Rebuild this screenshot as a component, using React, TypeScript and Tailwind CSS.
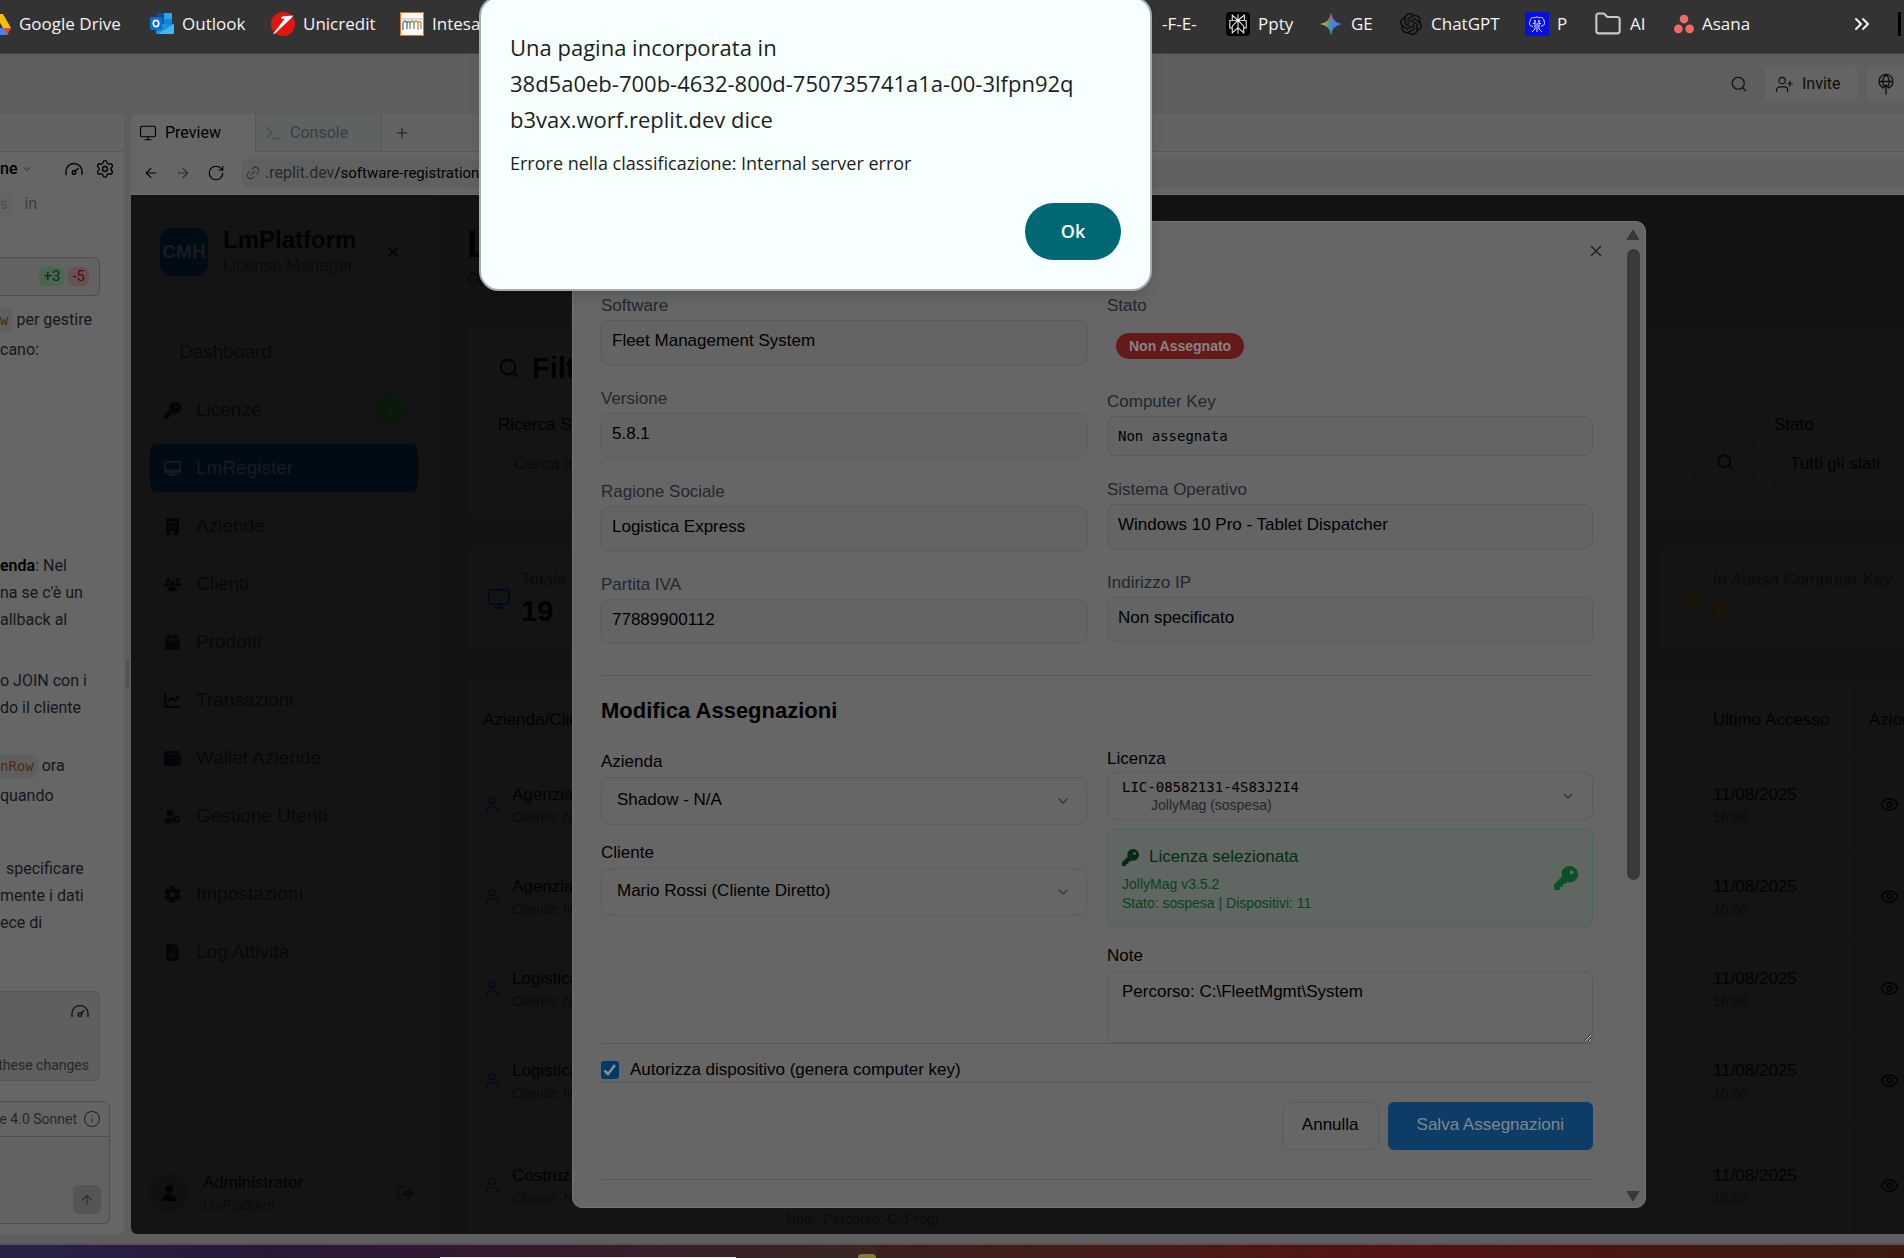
import type { ReactNode } from "react";
import {
  FaBox,
  FaBuilding,
  FaChartLine,
  FaDesktop,
  FaFileLines,
  FaGear,
  FaKey,
  FaRightFromBracket,
  FaUser,
  FaUserGear,
  FaUsers,
  FaWallet,
} from "react-icons/fa6";
import { SiAsana, SiOpenai, SiPerplexity } from "react-icons/si";
import {
  ArrowLeft,
  ArrowRight,
  ArrowUp,
  ChevronDown,
  ChevronsRight,
  Eye,
  Folder,
  Info,
  Link2,
  Monitor,
  Plus,
  RotateCw,
  Search,
  Settings,
  User,
  UserPlus,
  X,
} from "lucide-react";

/* ---------- Bookmark icons ---------- */

function DriveIcon() {
  return (
    <svg viewBox="0 0 24 24" className="h-6 w-6 shrink-0">
      <path d="M8 2h8l8 14h-8z" fill="#fbbc04" />
      <path d="M8 2l4 7-8 14-4-7z" fill="#0f9d58" />
      <path d="M8 16h16l-4 7H4z" fill="#4285f4" />
      <path d="M16 16h8l-4 7z" fill="#ea4335" />
    </svg>
  );
}

function OutlookIcon() {
  return (
    <svg viewBox="0 0 24 24" className="h-6 w-6 shrink-0">
      <path d="M7 1h15v11H7z" fill="#0f5fb8" />
      <path d="M7 1h7v6H7z" fill="#0b4e9e" />
      <path d="M14 1h8v6h-8z" fill="#2aa5ea" />
      <path d="M14 7h8v5h-8z" fill="#1583d8" />
      <path d="M6 12h18v9a1 1 0 0 1-1 1H7a1 1 0 0 1-1-1z" fill="#1a8ee0" />
      <path d="M24 12L8 22h15a1 1 0 0 0 1-1z" fill="#41b9f2" />
      <rect x="0" y="5" width="12" height="13" rx="1" fill="#0a6cd0" />
      <ellipse cx="6" cy="11.500" rx="2.700" ry="3.100" fill="none" stroke="#fff" strokeWidth="1.700" />
    </svg>
  );
}

function UnicreditIcon() {
  return (
    <svg viewBox="0 0 24 24" className="h-6 w-6 shrink-0">
      <circle cx="12" cy="12" r="12" fill="#e2160f" />
      <path d="M11 4.500l11-1-1 2L4 21.500l-2 .5L13.500 7 10 6.500z" fill="#fff" />
    </svg>
  );
}

function IntesaIcon() {
  return (
    <svg viewBox="0 0 24 24" className="h-6 w-6 shrink-0">
      <rect x="0.500" y="0.500" width="23" height="23" fill="#fff" stroke="#ee6b1e" />
      <path d="M2 7h20" stroke="#e8a27a" />
      <path d="M3 18V11q2-4 4 0v6M7 11q1-3 3 0" fill="none" stroke="#5b7d9c" strokeWidth="1.400" />
      <path d="M10 17v-6q2-4 4 0v6" fill="none" stroke="#6d9a62" strokeWidth="1.400" />
      <path d="M14 11q2-4 4 0v7M18 11q1-3 3 0v6" fill="none" stroke="#c98a5c" strokeWidth="1.400" />
    </svg>
  );
}

function GeminiIcon() {
  return (
    <svg viewBox="0 0 24 24" className="h-6 w-6 shrink-0">
      <defs>
        <linearGradient id="gem-h" x1="0" y1="0" x2="1" y2="0">
          <stop offset="0" stopColor="#fbbc04" />
          <stop offset="0.400" stopColor="#4f9d8f" />
          <stop offset="0.600" stopColor="#3b82f6" />
          <stop offset="1" stopColor="#3b82f6" />
        </linearGradient>
        <linearGradient id="gem-v" x1="0" y1="0" x2="0" y2="1">
          <stop offset="0" stopColor="#ef4444" />
          <stop offset="0.450" stopColor="#ef4444" stopOpacity="0" />
          <stop offset="0.700" stopColor="#22b45a" stopOpacity="0" />
          <stop offset="1" stopColor="#22b45a" />
        </linearGradient>
      </defs>
      <path d="M12 1q1.500 9.500 11 11-9.500 1.500-11 11-1.500-9.500-11-11Q10.500 10.500 12 1z" fill="url(#gem-h)" />
      <path d="M12 1q1.500 9.500 11 11-9.500 1.500-11 11-1.500-9.500-11-11Q10.500 10.500 12 1z" fill="url(#gem-v)" />
    </svg>
  );
}

function BrainIcon() {
  return (
    <svg viewBox="0 0 24 24" className="h-6 w-6 shrink-0">
      <rect width="24" height="24" fill="#0510e0" />
      <path
        d="M8 14.500c-3 0-4.500-3-3-5C5 6 8 4.500 10 6c1-1.500 3-1.500 4 0 2-1.500 5 0 5 3 1.500 2.500 0 5-3 5M9 9h2M13 9h2M10 8v9l-3 3M12 11v9M14 8v9l3 3M8 11.500h2M14 11.500h2"
        fill="none"
        stroke="#dfe3ff"
        strokeWidth="1"
      />
    </svg>
  );
}

function GaugeIcon() {
  return (
    <svg viewBox="0 0 18 14" className="h-[14px] w-[18px]" fill="none" stroke="currentColor" strokeWidth="1.400" strokeLinecap="round">
      <path d="M1 12.500V9.500a8 8 0 0 1 16 0v3" />
      <circle cx="9" cy="10.500" r="1.800" />
      <path d="M10.200 9.200L13 6.500" />
    </svg>
  );
}

function DeployIcon() {
  return (
    <svg viewBox="0 0 20 22" className="h-[22px] w-5" fill="none" stroke="currentColor" strokeWidth="1.300" strokeLinecap="round" strokeLinejoin="round">
      <path d="M6.500 14.500a7 7 0 1 1 7 0M3 8.500h14M10 1.500c-4 4-4 8-2 12M10 1.500c4 4 4 8 2 12M10 12v9M7 15l3-3 3 3" />
    </svg>
  );
}

type Mark = { label: string; icon?: ReactNode; width: string };

const leftMarks: Mark[] = [
  { label: "Google Drive", icon: <DriveIcon />, width: "w-[163px]" },
  { label: "Outlook", icon: <OutlookIcon />, width: "w-[121px]" },
  { label: "Unicredit", icon: <UnicreditIcon />, width: "w-[129px]" },
  { label: "Intesa", icon: <IntesaIcon />, width: "w-[100px]" },
];

const rightMarks: Mark[] = [
  { label: "-F-E-", width: "w-[64px]" },
  {
    label: "Ppty",
    icon: (
      <span className="flex h-6 w-6 shrink-0 items-center justify-center rounded-sm bg-black text-white">
        <SiPerplexity className="h-5 w-5" />
      </span>
    ),
    width: "w-[93px]",
  },
  { label: "GE", icon: <GeminiIcon />, width: "w-[80px]" },
  { label: "ChatGPT", icon: <SiOpenai className="h-[22px] w-6 shrink-0 text-[#0c0c0c]" />, width: "w-[126px]" },
  { label: "P", icon: <BrainIcon />, width: "w-[69px]" },
  { label: "AI", icon: <Folder className="h-7 w-7 shrink-0 text-[#c9c9c9]" strokeWidth={1.8} />, width: "w-[80px]" },
  { label: "Asana", icon: <SiAsana className="h-5 w-5 shrink-0 text-[#f06a6a]" />, width: "w-[84px]" },
];

function Bookmark({ label, icon, width }: Mark) {
  return (
    <a href="#" className={`flex h-12 shrink-0 items-center gap-2 whitespace-nowrap ${width}`}>
      {icon}
      {label}
    </a>
  );
}

function BookmarksBar() {
  return (
    <nav className="flex h-[54px] shrink-0 justify-between overflow-hidden border-b border-[#414141] bg-[#333333] font-['Open_Sans',sans-serif] text-[17px] text-[#f4f4f4]">
      <div className="-ml-[13px] flex">
        {leftMarks.map((m) => (
          <Bookmark key={m.label} {...m} />
        ))}
      </div>
      <div className="flex">
        {rightMarks.map((m) => (
          <Bookmark key={m.label} {...m} />
        ))}
        <button aria-label="Altri preferiti" className="ml-24 flex h-12 w-11 items-center">
          <ChevronsRight className="-ml-1 h-6 w-6" strokeWidth={2} />
        </button>
        <div className="mt-3 mr-[3px] h-6 w-[3px] bg-black" />
      </div>
    </nav>
  );
}

/* ---------- Left chat column ---------- */

function CodeChip({ children }: { children: ReactNode }) {
  return (
    <code className="mr-1 rounded-r-md bg-[#5f5f5f] py-1 pr-1 font-['DejaVu_Sans_Mono',monospace] text-[14px] text-[#4a2c10]">
      {children}
    </code>
  );
}

function ChatColumn() {
  return (
    <aside className="flex w-[124px] shrink-0 flex-col overflow-hidden rounded-r-md bg-[#666666] text-[16px] whitespace-nowrap text-[#15171a]">
      <div className="h-[38px] shrink-0 border-b border-[#575757] bg-[#636363]" />
      <div className="flex h-[34px] shrink-0 items-center font-medium text-black">
        <span>ne</span>
        <ChevronDown className="ml-1 h-3 w-3 text-[#2b2b2b]" />
        <button aria-label="Prestazioni" className="ml-8"><GaugeIcon /></button>
        <button aria-label="Impostazioni chat" className="ml-3"><Settings className="h-5 w-5" strokeWidth={1.6} /></button>
      </div>
      <p className="mt-1 h-[27px] leading-[27px] text-[#3b3d40]">
        <code className="mr-3 rounded-r-md bg-[#646464] py-1 pr-1 font-['DejaVu_Sans_Mono',monospace] text-[14px] text-[#544a3e]">s</code>in
      </p>
      <div className="mt-10 mr-6 flex h-[39px] shrink-0 items-center justify-end gap-1 rounded-r-md border border-l-0 border-[#4e4e4e] bg-[#626262] pr-[10px] text-[15px]">
        <span className="rounded-md bg-[#4a664f] px-1 leading-[19px] text-[#0d2b14]">+3</span>
        <span className="rounded-md bg-[#665252] px-1 leading-[19px] text-[#54080a]">-5</span>
      </div>
      <p className="mt-[9px] leading-[30px]"><CodeChip>w</CodeChip>per gestire</p>
      <p className="leading-[30px]">cano:</p>
      <p className="mt-[187px] leading-[27px]"><b className="font-semibold text-black">enda</b>: Nel</p>
      <p className="leading-[27px]">na se c'è un</p>
      <p className="leading-[27px]">allback al</p>
      <p className="mt-[34px] leading-[27px]">o JOIN con i</p>
      <p className="leading-[27px]">do il cliente</p>
      <p className="mt-[30px] leading-[30px]"><CodeChip>nRow</CodeChip>ora</p>
      <p className="leading-[30px]">quando</p>
      <p className="mt-11 pl-[6px] leading-[27px]">specificare</p>
      <p className="leading-[27px]">mente i dati</p>
      <p className="leading-[27px]">ece di</p>
      <div className="mt-auto mr-6 flex h-[90px] shrink-0 flex-col items-end justify-between rounded-r-md border border-l-0 border-[#575757] bg-[#5f5f5f] pt-3 pr-[10px] pb-1">
        <GaugeIcon />
        <span className="text-[14px] leading-[21px] text-[#26282b]">these changes</span>
      </div>
      <div className="mt-5 mr-[14px] mb-[10px] flex h-[123px] shrink-0 flex-col rounded-r-md border border-l-0 border-[#4e4e4e] bg-[#626262]">
        <div className="flex h-[35px] items-center justify-end gap-[6px] border-b border-[#4e4e4e] bg-[#646464] pr-2 text-[14px] text-[#26282b]">
          <span>e 4.0 Sonnet</span>
          <Info className="h-[18px] w-[18px] shrink-0" strokeWidth={1.5} />
        </div>
        <button aria-label="Invia" className="mt-auto mr-2 mb-[9px] flex h-[29px] w-7 items-center justify-center self-end rounded-md bg-[#555555] text-[#2e2e2e]">
          <ArrowUp className="h-4 w-4" strokeWidth={1.6} />
        </button>
      </div>
    </aside>
  );
}

/* ---------- Preview pane chrome ---------- */

function PaneTabs() {
  return (
    <div className="flex h-[38px] shrink-0 bg-[#636363] text-[16px]">
      <button className="flex w-[124px] items-center gap-2 bg-[#666666] pl-2 text-black">
        <Monitor className="h-[18px] w-[18px]" strokeWidth={1.6} />
        Preview
      </button>
      <button className="flex w-[127px] items-center gap-2 border-x border-b border-[#555858] bg-[#5f6262] pl-2 text-[#3a3d3f]">
        <svg viewBox="0 0 18 14" className="h-[14px] w-[18px]" fill="none" stroke="#4d4b42" strokeWidth="1.500">
          <path d="M2 1l6 5.500L2 12M9 12.500h8" />
        </svg>
        Console
      </button>
      <div className="flex flex-1 items-center border-b border-[#575757] pl-3">
        <button aria-label="Nuova scheda" className="text-[#1a1a1a]"><Plus className="h-4 w-4" strokeWidth={1.5} /></button>
      </div>
    </div>
  );
}

function AddressBar() {
  return (
    <div className="flex h-[43px] shrink-0 items-center border-b border-[#6f6f6f] bg-[#666666] pl-3 text-black">
      <button aria-label="Indietro"><ArrowLeft className="h-4 w-4" strokeWidth={1.6} /></button>
      <button aria-label="Avanti" className="ml-4 text-[#2b2b2b]"><ArrowRight className="h-4 w-4" strokeWidth={1.6} /></button>
      <button aria-label="Ricarica" className="ml-4"><RotateCw className="h-[18px] w-[18px]" strokeWidth={1.5} /></button>
      <div className="ml-4 flex h-[29px] flex-1 items-center rounded-l-lg bg-[#606060] pl-1 text-[16px]">
        <Link2 className="h-4 w-4 -rotate-45 text-[#2f2f2f]" strokeWidth={1.5} />
        <span className="ml-1 text-[#26282b]">.replit.dev</span>
        <span className="text-[15px]">/software-registrations</span>
      </div>
    </div>
  );
}

/* ---------- Application sidebar ---------- */

type NavEntry = { label: string; icon?: ReactNode; badge?: string; active?: boolean };

const faClass = "h-[17px] w-auto";

const mainNav: NavEntry[] = [
  { label: "Dashboard" },
  { label: "Licenze", icon: <FaKey className={faClass} />, badge: "1" },
  { label: "LmRegister", icon: <FaDesktop className={faClass} />, active: true },
  { label: "Aziende", icon: <FaBuilding className={faClass} /> },
  { label: "Clienti", icon: <FaUsers className={faClass} /> },
  { label: "Prodotti", icon: <FaBox className={faClass} /> },
  { label: "Transazioni", icon: <FaChartLine className={faClass} /> },
  { label: "Wallet Aziende", icon: <FaWallet className={faClass} /> },
  { label: "Gestione Utenti", icon: <FaUserGear className={faClass} /> },
];

const systemNav: NavEntry[] = [
  { label: "Impostazioni", icon: <FaGear className={faClass} /> },
  { label: "Log Attività", icon: <FaFileLines className={faClass} /> },
];

function NavItem({ label, icon, badge, active }: NavEntry) {
  return (
    <a
      href="#"
      className={`flex h-12 items-center rounded-lg px-[14px] text-[19px] ${
        active ? "bg-[#000b15] text-[#171c22]" : "text-[#070809]"
      }`}
    >
      <span className={active ? "mr-[15px]" : "mr-[15px] text-[#030508]"}>{icon}</span>
      {label}
      {badge && (
        <span className="ml-auto flex h-7 w-7 items-center justify-center rounded-full bg-[#08190a] text-[14px] text-[#151c16]">
          {badge}
        </span>
      )}
    </a>
  );
}

function Sidebar() {
  return (
    <aside className="flex w-[307px] shrink-0 flex-col border-r border-[#111111] bg-[#141414]">
      <div className="flex h-[115px] shrink-0 items-center border-b border-[#111111] pl-[29px]">
        <div className="flex h-12 w-12 items-center justify-center rounded-xl bg-[#000b15] text-[19px] font-bold text-[#171c22]">CMH</div>
        <div className="ml-[15px]">
          <div className="text-[24px] leading-7 font-bold text-[#010204]">LmPlatform</div>
          <div className="text-[17px] leading-6 text-[#0a0b0c]">License Manager</div>
        </div>
        <button aria-label="Chiudi menu" className="ml-7 text-black"><X className="h-[18px] w-[18px]" /></button>
      </div>
      <nav className="flex flex-col gap-[10px] px-[19px] pt-[18px]">
        {mainNav.map((n) => (
          <NavItem key={n.label} {...n} />
        ))}
      </nav>
      <nav className="mx-[19px] mt-[11px] flex flex-col gap-[10px] border-t border-[#111111] pt-[18px]">
        {systemNav.map((n) => (
          <NavItem key={n.label} {...n} />
        ))}
      </nav>
      <div className="mt-auto flex h-[83px] shrink-0 items-center border-t border-[#111111] px-[19px]">
        <div className="flex h-[38px] w-[38px] items-center justify-center rounded-full bg-[#111112] text-[#030303]">
          <FaUser className="h-4 w-auto" />
        </div>
        <div className="ml-[15px]">
          <div className="text-[17px] leading-6 text-[#030303]">Administrator</div>
          <div className="text-[14px] leading-5 text-[#0a0b0c]">LmPlatform</div>
        </div>
        <button aria-label="Esci" className="mr-1 ml-auto text-[#0a0b0c]"><FaRightFromBracket className="h-[17px] w-auto" /></button>
      </div>
    </aside>
  );
}

/* ---------- Dashboard page behind the dialog ---------- */

const rows = ["Agenzia", "Agenzia", "Logistica", "Logistica", "Costruzioni"];

function DashboardPage() {
  return (
    <main className="min-w-0 flex-1 overflow-hidden bg-[#131313] pt-7 pl-[29px] text-[17px] text-[#020202]">
      <div className="-mr-[123px]">
        <h1 className="text-[36px] leading-[44px] font-bold">LmRegister</h1>
        <p className="leading-[26px] text-[#0a0a0b]">Gestione</p>

        <section className="mt-8 h-[193px] rounded-lg border border-[#111111] bg-[#141414] px-[30px] pt-6">
          <h2 className="flex items-center gap-3 text-[29px] leading-9 font-bold">
            <Search className="h-[22px] w-[22px]" strokeWidth={2} />
            Filtri
          </h2>
          <div className="mt-[27px] flex gap-5">
            <div className="min-w-0 flex-1">
              <label htmlFor="ricerca" className="block leading-6">Ricerca Software</label>
              <div className="mt-[3px] flex gap-[10px]">
                <input id="ricerca" placeholder="Cerca in" className="h-12 min-w-0 flex-1 rounded-lg border border-[#111111] bg-transparent px-[15px] placeholder:text-[#0a0a0b]" />
                <button aria-label="Cerca" className="flex h-[43px] w-[59px] items-center justify-center rounded-lg border border-[#111111]">
                  <Search className="h-[18px] w-[18px]" />
                </button>
              </div>
            </div>
            <div className="w-[222px]">
              <label htmlFor="stato-filtro" className="block leading-6">Stato</label>
              <select id="stato-filtro" className="mt-[3px] h-12 w-full appearance-none rounded-lg border border-[#111111] bg-transparent px-[15px]">
                <option>Tutti gli stati</option>
              </select>
            </div>
          </div>
        </section>

        <section className="mt-[29px] grid grid-cols-4 gap-[29px]">
          <div className="flex h-[104px] items-center gap-[10px] rounded-lg border border-[#111111] bg-[#141414] pl-[19px]">
            <Monitor className="h-6 w-6 text-[#03081a]" strokeWidth={1.8} />
            <div>
              <div className="leading-6 text-[#0a0a0b]">Totale</div>
              <div className="text-[29px] leading-[38px] font-bold">19</div>
            </div>
          </div>
          <div className="h-[104px] rounded-lg border border-[#111111] bg-[#141414]" />
          <div className="h-[104px] rounded-lg border border-[#111111] bg-[#141414]" />
          <div className="flex h-[104px] items-center gap-[10px] rounded-lg border border-[#111111] bg-[#141414] pl-[19px]">
            <Settings className="h-6 w-6 text-[#1a1500]" strokeWidth={1.8} />
            <div>
              <div className="leading-6 text-[#0a0a0b]">In Attesa Computer Key</div>
              <div className="text-[29px] leading-[38px] font-bold text-[#1a1300]">0</div>
            </div>
          </div>
        </section>

        <table className="mt-[29px] w-full table-fixed border border-[#111111] bg-[#141414] text-left">
          <colgroup>
            <col className="w-[275px]" />
            <col className="w-[270px]" />
            <col className="w-[517px]" />
            <col className="w-[170px]" />
            <col className="w-[156px]" />
            <col />
          </colgroup>
          <thead>
            <tr className="h-[78px] border-b border-[#111111]">
              <th className="border-r border-[#121212] pl-[15px] font-normal">Azienda/Cliente</th>
              <th className="border-r border-[#121212]" />
              <th className="border-r border-[#121212]" />
              <th className="border-r border-[#121212]" />
              <th className="border-r border-[#121212] pl-[13px] font-normal">Ultimo Accesso</th>
              <th className="pl-[13px] font-normal">Azioni</th>
            </tr>
          </thead>
          <tbody>
            {rows.map((name, i) => {
              const last = i === rows.length - 1;
              return (
                <tr key={i} className={last ? "h-[118px]" : "h-[92px] border-b border-[#111111]"}>
                  <td className="border-r border-[#121212] pl-[15px]">
                    <div className="flex items-center gap-[10px]">
                      <User className="h-[19px] w-[19px] shrink-0 text-[#040a1c]" strokeWidth={1.8} />
                      <div>
                        <div className="leading-6">{name}</div>
                        <div className="text-[14px] leading-5 text-[#0a0a0b]">Cliente: N/A</div>
                      </div>
                    </div>
                  </td>
                  <td className="border-r border-[#121212] pb-4 pl-[43px] align-bottom text-[14px] leading-[18px] whitespace-nowrap text-[#0a0a0b]">
                    {last && "Note: Percorso: C:\\Progr..."}
                  </td>
                  <td className="border-r border-[#121212]" />
                  <td className="border-r border-[#121212]" />
                  <td className="border-r border-[#121212] pl-[13px]">
                    <div className="leading-6">11/08/2025</div>
                    <div className="text-[14px] leading-5 text-[#0a0a0b]">16:08</div>
                  </td>
                  <td className="pl-6">
                    <button aria-label="Visualizza" className="block"><Eye className="h-[19px] w-[19px]" /></button>
                  </td>
                </tr>
              );
            })}
          </tbody>
        </table>
      </div>
    </main>
  );
}

/* ---------- Assignment dialog ---------- */

const boxClass = "block w-full rounded-lg border border-[#5b5b5b]";

function ReadField({ id, label, value, mono }: { id: string; label: string; value: string; mono?: boolean }) {
  return (
    <div>
      <label htmlFor={id} className="block h-[26px] leading-6 text-[#23272e]">{label}</label>
      <input
        id={id}
        readOnly
        value={value}
        className={`${boxClass} bg-[#646464] px-[10px] text-black ${
          mono ? "h-10 font-['DejaVu_Sans_Mono',monospace] text-[14px]" : "h-[45px] pb-1"
        }`}
      />
    </div>
  );
}

function SelectField({ id, label, value }: { id: string; label: string; value: string }) {
  return (
    <div>
      <label htmlFor={id} className="block h-[27px] leading-6">{label}</label>
      <div className="relative">
        <select id={id} className={`${boxClass} h-12 appearance-none bg-[#666666] px-[15px] pb-[2px]`}>
          <option>{value}</option>
        </select>
        <ChevronDown className="pointer-events-none absolute top-4 right-4 h-4 w-4 text-[#333333]" strokeWidth={1.8} />
      </div>
    </div>
  );
}

function AssignmentDialog() {
  return (
    <div role="dialog" aria-label="Modifica Assegnazioni" className="absolute top-[26px] right-[258px] bottom-[26px] left-[441px] flex overflow-hidden rounded-[10px] border border-[#747474] bg-[#666666] text-[17px] text-black">
      <div className="min-w-0 flex-1 overflow-hidden pr-7 pl-7">
        <div className="flex h-[72px] items-start justify-end pt-5">
          <button aria-label="Chiudi" className="-mr-3 text-[#1c1c1c]"><X className="h-[18px] w-[18px]" strokeWidth={1.7} /></button>
        </div>
        <div className="grid grid-cols-2 gap-5">
          <div className="flex flex-col gap-[22px]">
            <ReadField id="software" label="Software" value="Fleet Management System" />
            <ReadField id="versione" label="Versione" value="5.8.1" />
            <ReadField id="ragione" label="Ragione Sociale" value="Logistica Express" />
            <ReadField id="piva" label="Partita IVA" value="77889900112" />
          </div>
          <div className="flex flex-col gap-[22px]">
            <div className="h-[74px]">
              <div className="h-[26px] leading-6 text-[#23272e]">Stato</div>
              <span className="mt-[13px] ml-[9px] inline-block rounded-full bg-[#651a1a] px-[13px] text-[14px] leading-[26px] font-bold text-[#858585]">
                Non Assegnato
              </span>
            </div>
            <ReadField id="ckey" label="Computer Key" value="Non assegnata" mono />
            <ReadField id="so" label="Sistema Operativo" value="Windows 10 Pro - Tablet Dispatcher" />
            <ReadField id="ip" label="Indirizzo IP" value="Non specificato" />
          </div>
        </div>

        <h2 className="mt-[31px] border-t border-[#585858] pt-5 text-[22px] leading-[30px] font-bold">Modifica Assegnazioni</h2>

        <div className="mt-[21px] grid grid-cols-2 gap-5">
          <div className="flex flex-col gap-4 pt-[3px]">
            <SelectField id="azienda" label="Azienda" value="Shadow - N/A" />
            <SelectField id="cliente" label="Cliente" value="Mario Rossi (Cliente Diretto)" />
          </div>
          <div>
            <div id="licenza-label" className="h-[25px] leading-6">Licenza</div>
            <button aria-labelledby="licenza-label" aria-haspopup="listbox" className={`${boxClass} flex! h-12 items-center justify-between pr-4 pl-[14px] text-left`}>
              <span>
                <span className="block font-['DejaVu_Sans_Mono',monospace] text-[14px] leading-[18px]">LIC-08582131-4S83J2I4</span>
                <span className="block pl-[29px] text-[14px] leading-[18px] text-[#23272e]">JollyMag (sospesa)</span>
              </span>
              <ChevronDown className="h-4 w-4 text-[#333333]" strokeWidth={1.8} />
            </button>
            <div className="mt-[9px] flex h-[98px] items-center justify-between rounded-lg border border-[#4a6654] bg-[#606661] pr-[14px] pl-[14px]">
              <div>
                <div className="flex items-center gap-[10px] leading-7 text-[#082a15]">
                  <FaKey className="h-[17px] w-[17px]" />
                  Licenza selezionata
                </div>
                <div className="mt-1 text-[14px] leading-[19px] text-[#084220]">JollyMag v3.5.2</div>
                <div className="text-[14px] leading-[19px] text-[#084220]">Stato: sospesa | Dispositivi: 11</div>
              </div>
              <FaKey className="h-6 w-6 text-[#0d4f26]" />
            </div>
            <label htmlFor="note" className="mt-[17px] block h-[27px] leading-6">Note</label>
            <textarea id="note" defaultValue={"Percorso: C:\\FleetMgmt\\System"} className={`${boxClass} h-[72px] resize-y bg-[#666666] px-[14px] py-2 leading-6`} />
          </div>
        </div>

        <div className="flex h-[40px] items-end border-y border-[#585858] pb-0">
          <label className="flex items-center gap-[11px] leading-6">
            <input type="checkbox" defaultChecked className="peer sr-only" />
            <span className="flex h-[18px] w-[18px] items-center justify-center rounded-[3px] bg-[#003866] text-[#8a8a8a]">
              <svg viewBox="0 0 18 18" className="h-[18px] w-[18px]" fill="none" stroke="currentColor" strokeWidth="2.600">
                <path d="M3.500 9.500l3.500 3.500 7-9" />
              </svg>
            </span>
            Autorizza dispositivo (genera computer key)
          </label>
        </div>

        <div className="mt-[19px] flex justify-end gap-[9px]">
          <button className="h-12 rounded-lg border border-[#5b5b5b] px-[19px] pb-[2px]">Annulla</button>
          <button className="h-12 rounded-md bg-[#0d3d66] px-[29px] pb-[2px] text-[#7d8890]">Salva Assegnazioni</button>
        </div>
        <div className="mt-[29px] border-t border-[#585858]" />
      </div>

      <div className="flex w-[24px] shrink-0 flex-col items-center text-[#383838]">
        <svg viewBox="0 0 16 12" className="mt-[7px] h-3 w-4 shrink-0"><path d="M8 1l6 9.500H2z" fill="currentColor" stroke="currentColor" strokeLinejoin="round" /></svg>
        <div className="mt-2 h-[631px] w-[13px] rounded-full bg-[#3a3a3a]" />
        <svg viewBox="0 0 16 12" className="mt-auto mb-[5px] h-3 w-4 shrink-0"><path d="M8 11l6-9.500H2z" fill="currentColor" stroke="currentColor" strokeLinejoin="round" /></svg>
      </div>
    </div>
  );
}

/* ---------- Browser alert ---------- */

function BrowserAlert() {
  return (
    <div role="alertdialog" aria-labelledby="alert-title" className="absolute -top-1 left-[479px] flex w-[673px] flex-col rounded-[20px] border-2 border-[#a4adae] bg-[#f8ffff] px-[29px] pt-[31px] pb-[29px] font-['Open_Sans',sans-serif] text-[#1b1f20] shadow-lg">
      <h1 id="alert-title" className="text-[22px] leading-9 font-medium">
        Una pagina incorporata in
        <br />
        38d5a0eb-700b-4632-800d-750735741a1a-00-3lfpn92q
        <br />
        b3vax.worf.replit.dev dice
      </h1>
      <p className="mt-3 text-[18px] leading-7">Errore nella classificazione: Internal server error</p>
      <button className="mt-[26px] h-[57px] w-24 self-end rounded-full bg-[#006874] text-[18px] font-semibold text-white">Ok</button>
    </div>
  );
}

export default function App() {
  return (
    <div className="relative flex h-screen flex-col overflow-hidden bg-[#5e5e5e] font-['Roboto',sans-serif]">
      <BookmarksBar />

      <header className="flex h-[60px] shrink-0 items-center justify-end text-[16px] text-[#0d0d0d]">
        <button aria-label="Cerca" className="mr-[17px]"><Search className="h-[18px] w-[18px]" strokeWidth={1.5} /></button>
        <button className="flex h-[38px] w-[93px] items-center gap-2 rounded-lg bg-[#646464] pl-[10px]">
          <UserPlus className="h-[19px] w-[19px]" strokeWidth={1.4} />
          Invite
        </button>
        <button aria-label="Pubblica" className="ml-2 flex h-[38px] w-[38px] items-center rounded-l-lg bg-[#646464] pl-[10px]"><DeployIcon /></button>
      </header>

      <div className="flex min-h-0 flex-1">
        <ChatColumn />
        <div className="flex w-[7px] shrink-0 items-center justify-center">
          <div className="h-7 w-[3px] rounded-full bg-[#505050]" />
        </div>
        <div className="flex min-w-0 flex-1 flex-col overflow-hidden rounded-l-md">
          <PaneTabs />
          <AddressBar />
          <div className="relative flex min-h-0 flex-1 font-['Liberation_Sans',sans-serif]">
            <Sidebar />
            <DashboardPage />
            <AssignmentDialog />
          </div>
        </div>
      </div>

      <footer className="relative mt-[9px] h-[15px] shrink-0 border-t-2 border-[#5c4f57] bg-linear-to-r from-[#26203c] via-[#3a2420] to-[#3c1a12]">
        <div className="flex h-full">
          <div className="h-full w-[28%] bg-linear-to-r from-[#29234a] via-[#2a1838] to-[#361a30]" />
          <div className="h-full w-[18%] bg-linear-to-r from-[#361a30] to-[#38281f]" />
          <div className="h-full flex-1 bg-linear-to-r from-[#3a201c] via-[#521414] to-[#3c1a12]" />
        </div>
        <div className="absolute bottom-0 left-[440px] h-px w-[296px] bg-[#e8e8e8]" />
        <div className="absolute bottom-0 left-[858px] h-1 w-[18px] rounded-t-full bg-[#8a7a33]" />
      </footer>

      <BrowserAlert />
    </div>
  );
}
